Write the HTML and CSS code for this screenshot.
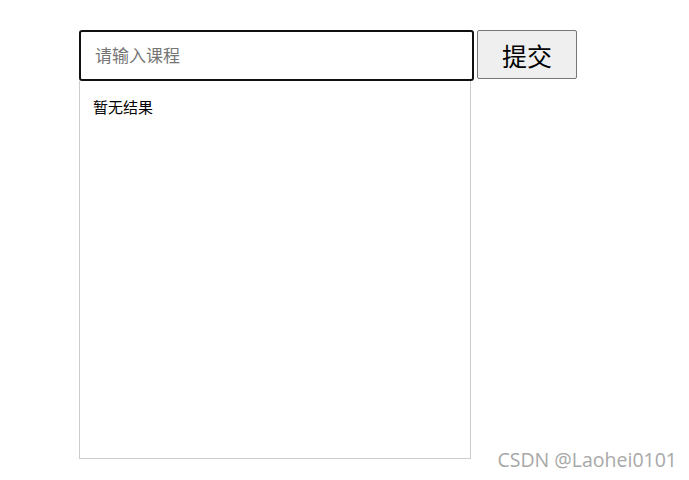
FILE: index.html
```html
<!DOCTYPE html>
<html lang="zh-CN">
<head>
  <meta charset="UTF-8">
  <title>课程搜索</title>
  <meta name="viewport" content="width=device-width, initial-scale=1.0">
  <link rel="stylesheet" href="styles.css">
</head>
<body>
  <div class="wrapper">
    <!-- 搜索栏 -->
    <div class="search-bar">
      <input type="text" class="search-input" placeholder="请输入课程">
      <button class="submit-btn">提交</button>
    </div>
    <!-- 结果列表 -->
    <div class="result-box">
      <p class="empty">暂无结果</p>
    </div>
  </div>
  <div class="watermark">CSDN @Laohei0101</div>
</body>
</html>
```

FILE: styles.css
```css
/* 기본 리셋 */
html, body {
  margin: 0;
  padding: 0;
  background-color: #ffffff;
  color: #000000;
  box-sizing: border-box;
  font-family: "Noto Sans CJK SC", "Noto Sans", sans-serif;
}
*, *::before, *::after {
  box-sizing: inherit;
}
.wrapper {
  padding: 30px 0 0 79px;
}
/* 搜索栏 */
.search-bar {
  display: flex;
  align-items: flex-start;
  gap: 3px;
}
.search-input {
  width: 395px;
  height: 51px;
  padding: 0 14px 3px;
  border: 2px solid #101010;
  border-radius: 3px;
  font-size: 17px;
  font-family: inherit;
  color: #000;
  outline: none;
}
.search-input::placeholder {
  color: #757575;
}
.submit-btn {
  width: 100px;
  height: 49px;
  background-color: #efefef;
  border: 1px solid #767676;
  border-radius: 2px;
  font-size: 25px;
  font-family: inherit;
  color: #000;
  padding: 0;
}
/* 结果列表 */
.result-box {
  width: 392px;
  height: 378px;
  border: 1px solid #cccccc;
  border-top: none;
  padding: 17px 13px;
}
.empty {
  margin: 0;
  font-size: 15px;
  line-height: 18px;
}
.watermark {
  position: absolute;
  right: 12px;
  bottom: 7px;
  font-family: "Open Sans", "Noto Sans", sans-serif;
  font-size: 19.5px;
  color: #a8a8a8;
}
```
